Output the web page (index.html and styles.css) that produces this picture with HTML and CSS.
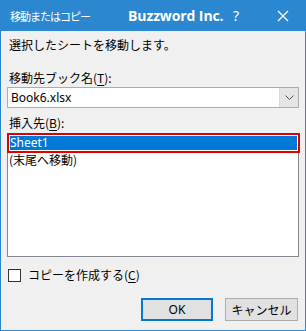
FILE: index.html
```html
<!DOCTYPE html>
<html lang="ja">
<head>
<meta charset="utf-8">
<link rel="stylesheet" href="styles.css">
</head>
<body>
<div class="dialog">
  <div class="titlebar">
    <span class="title">移動またはコピー</span>
    <span class="brand">Buzzword Inc.</span>
    <span class="help">?</span>
    <span class="close"><svg width="12" height="12" viewBox="0 0 12 12"><path d="M1 1 L11 11 M11 1 L1 11" stroke="#fff" stroke-width="1.2" fill="none"/></svg></span>
  </div>
  <div class="content">
    <div class="text intro">選択したシートを移動します。</div>
    <div class="text label1">移動先ブック名(<u>T</u>):</div>
    <div class="select">
      <span class="select-value">Book6.xlsx</span>
      <span class="select-btn"><svg width="9" height="6" viewBox="0 0 9 6"><path d="M0.5 0.5 L4.5 4.5 L8.5 0.5" stroke="#555" stroke-width="1" fill="none"/></svg></span>
    </div>
    <div class="text label2">挿入先(<u>B</u>):</div>
    <div class="listbox">
      <div class="item selected-wrap"><div class="item-sel">Sheet1</div></div>
      <div class="item plain">(末尾へ移動)</div>
    </div>
    <div class="check-row">
      <span class="checkbox"></span>
      <span class="text">コピーを作成する(<u>C</u>)</span>
    </div>
    <div class="buttons">
      <div class="btn ok">OK</div>
      <div class="btn">キャンセル</div>
    </div>
  </div>
</div>
</body>
</html>
```
FILE: styles.css
```css
* { box-sizing: border-box; }
html, body { margin: 0; padding: 0; }
body { width: 306px; height: 331px; overflow: hidden; font-family: "Noto Sans", "Noto Sans CJK JP", sans-serif; }
.dialog {
  width: 306px; height: 331px;
  background: #f0f0f0;
  border: 1px solid #2b88d0; border-top: none;
  display: flex; flex-direction: column;
}
.titlebar {
  height: 31px; margin: 0 -1px;
  background: #2b88d0; color: #fff;
  display: flex; align-items: center;
  padding-left: 10px;
  white-space: nowrap;
  overflow: hidden;
}
.titlebar > span { flex-shrink: 0; white-space: nowrap; }
.title { width: 118px; font-family: "Noto Sans CJK JP", sans-serif; font-size: 11px; line-height: 16px; letter-spacing: -1px; }
.brand { width: 105px; font-family: "Open Sans", sans-serif; font-weight: 700; font-size: 14px; letter-spacing: -0.1px; }
.help { width: 44px; font-family: "Noto Sans", sans-serif; font-size: 14px; }
.close { display: flex; }
.content { flex: 1; display: flex; flex-direction: column; padding: 0 6px 0 6px; }
.text { font-size: 12px; line-height: 16px; color: #000; font-family: "Noto Sans CJK JP", sans-serif; white-space: nowrap; }
.text u { text-underline-offset: 2px; }
.intro { margin-top: 6px; padding-left: 2px; }
.label1 { margin-top: 17px; padding-left: 2px; }
.select {
  margin-top: 1px; height: 21px; width: 292px;
  background: #fff; border: 1px solid #acacac;
  display: flex; align-items: center;
}
.select-value { flex: 1; font-size: 12px; padding-left: 3px; font-family: "Noto Sans", sans-serif; line-height: 16px; }
.select-btn { width: 19px; height: 19px; background: #e5e5e5; border-left: 1px solid #d9d9d9; display: flex; align-items: center; justify-content: center; }
.label2 { margin-top: 7px; padding-left: 2px; }
.listbox {
  margin-top: 2px; width: 292px; height: 124px;
  background: #fff; border: 1px solid #828790;
}
.item { font-size: 12px; line-height: 16px; padding-left: 2px; }
.selected-wrap {
  margin: -1px -2px 0 -1px;
  border: 2px solid #e00000;
  padding: 1px;
}
.item-sel { background: #0078d7; color: #fff; height: 14px; line-height: 14px; padding-left: 0; font-family: "Noto Sans", sans-serif; }
.plain { font-family: "Noto Sans CJK JP", sans-serif; padding-left: 1px; margin-top: -1px; }
.check-row { margin-top: 11px; display: flex; align-items: center; padding-left: 1px; height: 14px; }
.checkbox { width: 13px; height: 13px; border: 1px solid #333; background: #fff; margin-right: 7px; }
.buttons { margin-top: 16px; display: flex; justify-content: flex-end; gap: 12px; padding-right: 1px; }
.btn {
  width: 73px; height: 23px;
  background: #e1e1e1; border: 1px solid #adadad;
  display: flex; align-items: center; justify-content: center;
  font-size: 12px; font-family: "Noto Sans", "Noto Sans CJK JP", sans-serif;
}
.btn.ok { border: 2px solid #0078d7; width: 72px; }
```
